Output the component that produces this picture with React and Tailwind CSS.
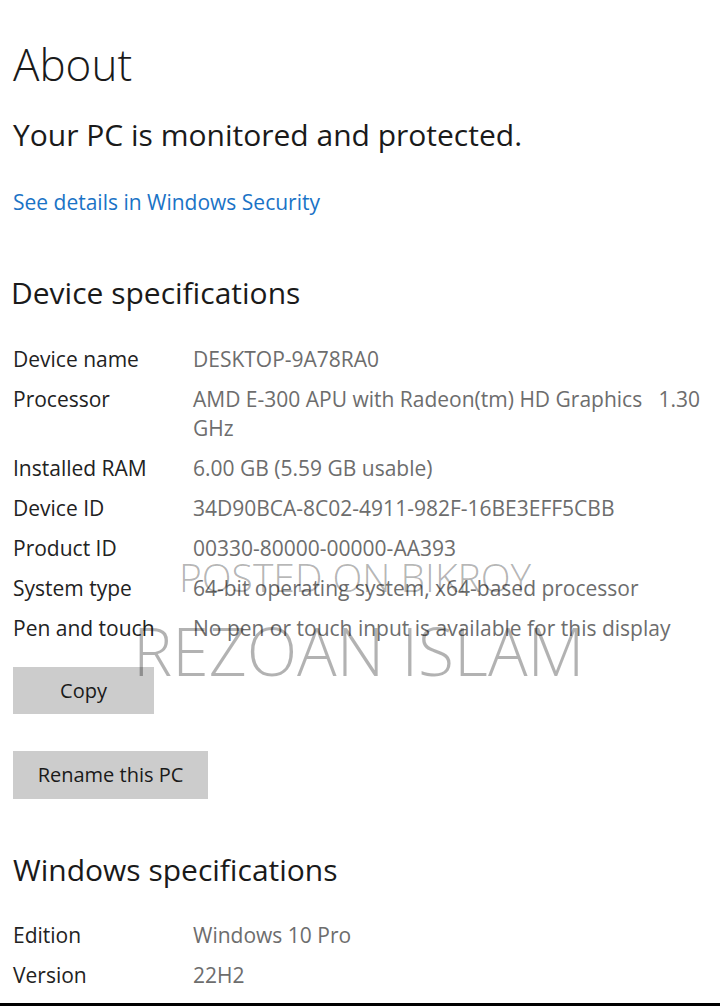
import React from "react"

const deviceSpecs = [
  { label: "Device name", value: "DESKTOP-9A78RA0" },
  {
    label: "Processor",
    value: (
      <>
        AMD E-300 APU with Radeon(tm) HD Graphics&nbsp;&nbsp;&nbsp;1.30
        <br />
        GHz
      </>
    ),
  },
  { label: "Installed RAM", value: "6.00 GB (5.59 GB usable)" },
  { label: "Device ID", value: "34D90BCA-8C02-4911-982F-16BE3EFF5CBB" },
  { label: "Product ID", value: "00330-80000-00000-AA393" },
  { label: "System type", value: "64-bit operating system, x64-based processor" },
  { label: "Pen and touch", value: "No pen or touch input is available for this display" },
]

const windowsSpecs = [
  { label: "Edition", value: "Windows 10 Pro" },
  { label: "Version", value: "22H2" },
]

function SpecRows({ rows }) {
  return (
    <div className="flex flex-col gap-[11px] text-[21px] leading-[29px]">
      {rows.map((row) => (
        <div key={row.label} className="flex">
          <div className="w-[180px] shrink-0 whitespace-nowrap text-[#222222]">{row.label}</div>
          <div className="whitespace-nowrap text-[#6d6d6d]">{row.value}</div>
        </div>
      ))}
    </div>
  )
}

export default function App() {
  return (
    <div className="relative flex h-[1006px] flex-col overflow-hidden bg-white font-['Open_Sans','Noto_Sans',sans-serif] text-[#1a1a1a]">
      <div className="px-[13px] pt-[36px]">
        <h1 className="text-[44px] font-light leading-[56px]">About</h1>
        <p className="mt-[23px] text-[30px] leading-[40px]">Your PC is monitored and protected.</p>
        <a className="mt-[33px] block text-[21px] leading-[28px] text-[#1a73c6]">See details in Windows Security</a>

        <h2 className="-ml-[2px] mt-[57px] text-[30px] leading-[40px]">Device specifications</h2>
        <div className="mt-[32px]">
          <SpecRows rows={deviceSpecs} />
        </div>

        <button className="mt-[24px] block h-[47px] w-[141px] bg-[#cccccc] text-[20px] text-[#1a1a1a]">Copy</button>
        <button className="mt-[37px] block h-[48px] w-[195px] bg-[#cccccc] text-[20px] text-[#1a1a1a]">Rename this PC</button>

        <h2 className="mt-[51px] text-[30px] leading-[40px]">Windows specifications</h2>
        <div className="mt-[31px]">
          <SpecRows rows={windowsSpecs} />
        </div>
      </div>

      <div className="mt-auto h-[3px] bg-black" />

      {/* watermark */}
      <div className="pointer-events-none absolute left-[179px] top-[555px] text-[39px] font-light leading-[44px] text-black/30">
        POSTED ON BIKROY
      </div>
      <div className="pointer-events-none absolute left-[133px] top-[612px] text-[66px] font-light leading-[76px] text-black/30">
        REZOAN ISLAM
      </div>
    </div>
  )
}
